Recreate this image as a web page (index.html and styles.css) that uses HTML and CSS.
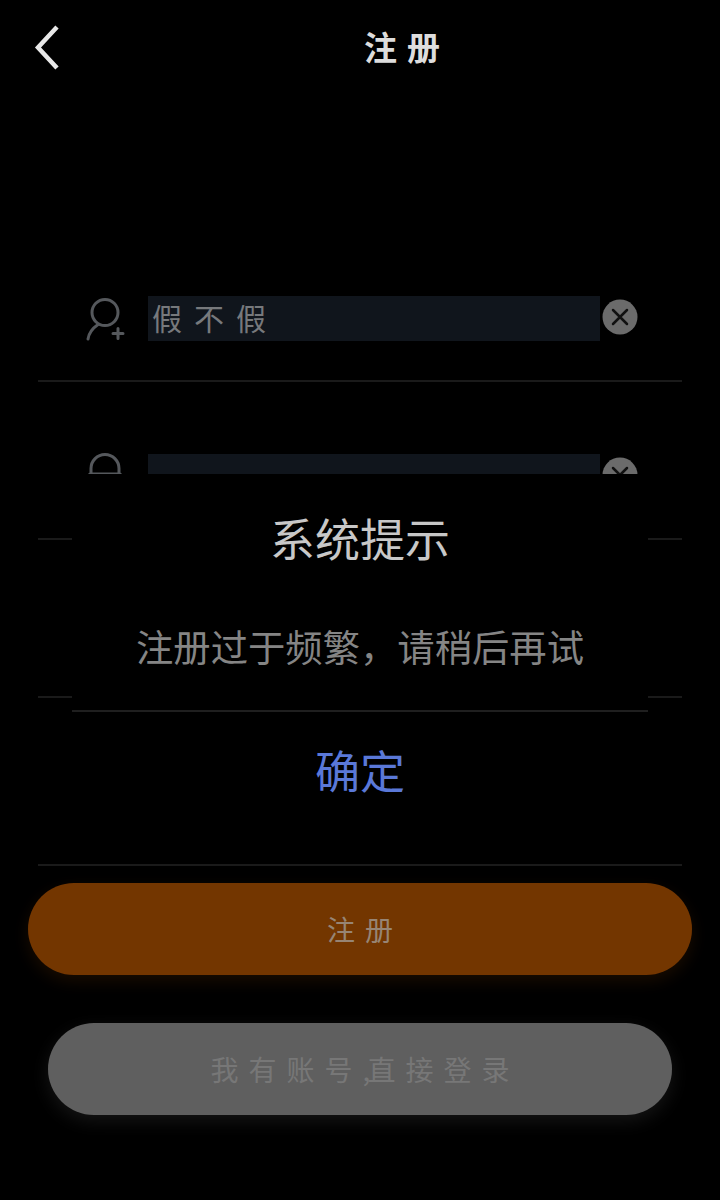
FILE: index.html
```html
<!DOCTYPE html>
<html lang="zh-CN">
<head>
<meta charset="utf-8">
<title>注册</title>
<link rel="stylesheet" href="styles.css">
</head>
<body>
<div class="page">
  <header class="header">
    <svg class="back" viewBox="0 0 30 48" aria-hidden="true"><path d="M25 4 6 24.500 25 45" /></svg>
    <h1 class="title">注册</h1>
  </header>
  <main class="form">
    <div class="row">
      <svg class="field-icon" viewBox="0 0 38 44" aria-hidden="true"><circle cx="19" cy="15.500" r="13"/><path d="M2 42C3 35 7 31 12 27.500"/><path class="plus" d="M27 36.500h10M32 31.500v10"/></svg>
      <div class="input">假不假</div>
      <svg class="clear" viewBox="0 0 36 36" aria-hidden="true"><circle cx="18" cy="18" r="17.500"/><path d="M11 11l14 14M25 11 11 25"/></svg>
    </div>
    <div class="row">
      <svg class="field-icon" viewBox="0 0 38 44" aria-hidden="true"><path d="M5 19v-5.500a14 14 0 0 1 28 0v5.500"/><rect x="3" y="19" width="32" height="22" rx="2"/></svg>
      <div class="input"></div>
      <svg class="clear" viewBox="0 0 36 36" aria-hidden="true"><circle cx="18" cy="18" r="17.500"/><path d="M11 11l14 14M25 11 11 25"/></svg>
    </div>
    <div class="row"></div>
    <div class="row row-last"></div>
  </main>
  <button class="btn btn-primary">注册</button>
  <button class="btn btn-secondary">我有账号<span class="comma">,</span>直接登录</button>
  <div class="dialog">
    <div class="dialog-body">
      <div class="dialog-title">系统提示</div>
      <div class="dialog-msg">注册过于频繁&#xFF0C;请稍后再试</div>
    </div>
    <div class="dialog-ok">确定</div>
  </div>
</div>
</body>
</html>
```
FILE: styles.css
```css
* { box-sizing: border-box; }
html, body { margin: 0; background: #000; }
body { font-family: "Noto Sans CJK SC", "Noto Sans", sans-serif; }
.page { position: relative; width: 720px; height: 1200px; overflow: hidden; background: #000; }
.header { height: 92px; display: flex; align-items: center; justify-content: center; position: relative; }
.back { position: absolute; left: 32px; top: 23px; width: 30px; height: 48px; fill: none; stroke: #e8e8e8; stroke-width: 4.500; }
.title { margin: 0; font-size: 33px; font-weight: 700; color: #ddd; letter-spacing: 10px; padding-left: 94px; line-height: 1; }
.form { margin: 132px 38px 0; }
.row { height: 158px; border-bottom: 2px solid #1a1a1a; padding: 72px 0 0 48px; display: flex; align-items: flex-start; }
.row-last { height: 168px; }
.field-icon { width: 38px; height: 44px; margin-top: 1px; flex: none; fill: none; stroke: #55585c; stroke-width: 3; stroke-linecap: round; overflow: visible; }
.input { width: 452px; height: 45px; margin-left: 24px; padding-left: 4px; background: #10151c; color: #77797c; font-size: 30px; letter-spacing: 12px; line-height: 42px; flex: none; }
.clear { width: 36px; height: 36px; margin: 3px 0 0 2px; flex: none; }
.clear circle { fill: #6b6b6b; }
.clear path { fill: none; stroke: #111; stroke-width: 2.500; stroke-linecap: round; }
.btn { display: block; height: 92px; border: 0; border-radius: 46px; font-family: inherit; font-size: 28px; letter-spacing: 10px; padding: 0 0 0 10px; }
.btn-primary { width: 664px; margin: 17px 0 0 28px; background: #733600; color: #978574; box-shadow: 0 6px 16px rgba(115, 54, 0, 0.22); }
.btn-secondary { width: 624px; margin: 48px 0 0 48px; background: #5f5f5f; color: #777; box-shadow: 0 6px 18px rgba(95, 95, 95, 0.22); }
.comma { letter-spacing: -3px; }
.dialog { position: absolute; left: 72px; top: 474px; width: 576px; height: 362px; background: #000; text-align: center; }
.dialog-body { height: 238px; border-bottom: 2px solid #1f1f1f; }
.dialog-title { padding-top: 34px; font-size: 45px; line-height: 60px; color: #c8c8c8; }
.dialog-msg { margin-top: 52px; font-size: 37.330px; line-height: 52px; color: #858585; }
.dialog-ok { margin-top: 28px; font-size: 45px; line-height: 60px; color: #5a78d8; }
```
